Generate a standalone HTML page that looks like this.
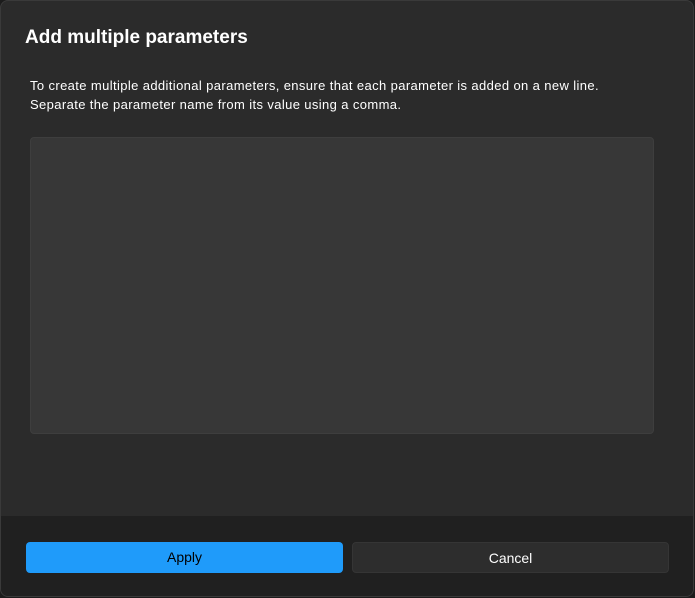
<!DOCTYPE html>
<html><head><style>
html,body{margin:0;padding:0;width:695px;height:598px;overflow:hidden;background:#1c1c1c;font-family:"Liberation Sans",sans-serif;}
.dlg{position:absolute;left:0;top:0;width:694px;height:597px;background:#2b2b2b;border:1px solid #3a3a3a;border-radius:8px;overflow:hidden;box-sizing:border-box;}
.title{position:absolute;left:24px;top:26px;font-size:19px;font-weight:bold;color:#fff;}
.desc{position:absolute;left:29px;top:75px;font-size:13px;letter-spacing:0.38px;line-height:19px;color:#fff;white-space:nowrap;}
.ta{position:absolute;left:29px;top:136px;width:624px;height:297px;background:#373737;border:1px solid #3e3e3e;border-radius:4px;box-sizing:border-box;}
.foot{position:absolute;left:0;top:515px;width:100%;height:82px;background:#202020;}
.btn{position:absolute;top:26px;height:31px;width:317px;border-radius:4px;font-size:14px;line-height:30px;text-align:center;box-sizing:border-box;}
.apply{left:25px;background:#1f9bfa;color:#000;}
.cancel{left:351px;background:#2d2d2d;color:#fff;border:1px solid #353535;}
</style></head><body>
<div class="dlg">
<div class="title">Add multiple parameters</div>
<div class="desc">To create multiple additional parameters, ensure that each parameter is added on a new line.<br>Separate the parameter name from its value using a comma.</div>
<div class="ta"></div>
<div class="foot">
<div class="btn apply">Apply</div>
<div class="btn cancel">Cancel</div>
</div>
</div>
</body></html>
